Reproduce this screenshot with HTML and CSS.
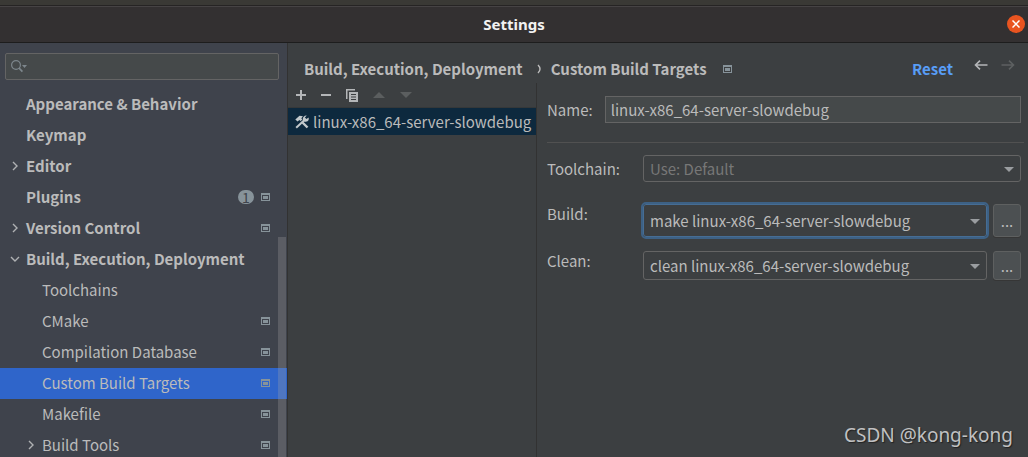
FILE: index.html
```html
<!DOCTYPE html>
<html lang="en">
<head>
<meta charset="utf-8">
<meta name="viewport" content="width=device-width, initial-scale=1">
<title>Settings</title>
<link rel="stylesheet" href="styles.css">
</head>
<body>
<svg class="defs" aria-hidden="true">
  <symbol id="project" viewBox="0 0 9 8"><path fill="currentColor" fill-rule="evenodd" d="M0 0h9v8H0zM1 2v5h7V2zM2 3h5v3H2z"/></symbol>
  <symbol id="right" viewBox="0 0 10 10"><path d="M3 1l4 4-4 4" fill="none" stroke="currentColor" stroke-width="1.4"/></symbol>
  <symbol id="down" viewBox="0 0 10 10"><path d="M1 3l4 4 4-4" fill="none" stroke="currentColor" stroke-width="1.4"/></symbol>
  <symbol id="caret" viewBox="0 0 10 5"><path d="M0 0h10L5 5z" fill="currentColor"/></symbol>
</svg>
<div class="window">
  <div class="backdrop"></div>
  <header class="titlebar">
    <h1 class="title">Settings</h1>
    <button class="close" aria-label="Close"><svg width="8" height="8" viewBox="0 0 8 8"><path d="M.5.5l7 7M7.5.5l-7 7" stroke="#fff" stroke-width="1.5"/></svg></button>
  </header>
  <div class="body">
    <aside class="sidebar">
      <div class="search">
        <svg class="search-icon" width="16" height="13" viewBox="0 0 16 13"><circle cx="5" cy="5" r="4.4" fill="none" stroke="#7d868c" stroke-width="1.2"/><path d="M8 8l3.4 3.6" stroke="#7d868c" stroke-width="1.8"/><path d="M11 5h5l-2.500 3z" fill="#7d868c"/></svg>
        <input class="search-input" type="text" aria-label="Search settings">
      </div>
      <nav class="tree" aria-label="Settings categories">
        <a class="row group" href="#"><span class="arrow"></span><span class="name">Appearance &amp; Behavior</span></a>
        <a class="row group" href="#"><span class="arrow"></span><span class="name">Keymap</span></a>
        <a class="row group" href="#"><svg class="arrow"><use href="#right"/></svg><span class="name">Editor</span></a>
        <a class="row group" href="#"><span class="arrow"></span><span class="name">Plugins</span><span class="badge">1</span><svg class="project"><use href="#project"/></svg></a>
        <a class="row group" href="#"><svg class="arrow"><use href="#right"/></svg><span class="name">Version Control</span><svg class="project"><use href="#project"/></svg></a>
        <a class="row group" href="#"><svg class="arrow"><use href="#down"/></svg><span class="name">Build, Execution, Deployment</span></a>
        <a class="row child" href="#"><span class="arrow"></span><span class="name">Toolchains</span></a>
        <a class="row child" href="#"><span class="arrow"></span><span class="name">CMake</span><svg class="project"><use href="#project"/></svg></a>
        <a class="row child" href="#"><span class="arrow"></span><span class="name">Compilation Database</span><svg class="project"><use href="#project"/></svg></a>
        <a class="row child selected" href="#" aria-current="page"><span class="arrow"></span><span class="name">Custom Build Targets</span><svg class="project"><use href="#project"/></svg></a>
        <a class="row child" href="#"><span class="arrow"></span><span class="name">Makefile</span><svg class="project"><use href="#project"/></svg></a>
        <a class="row child" href="#"><svg class="arrow"><use href="#right"/></svg><span class="name">Build Tools</span><svg class="project"><use href="#project"/></svg></a>
      </nav>
      <div class="scrollbar"></div>
    </aside>
    <main class="content">
      <div class="crumbs">
        <span>Build, Execution, Deployment</span>
        <svg class="sep" width="5" height="10" viewBox="0 0 5 10"><path d="M1 1q4 4 0 8" fill="none" stroke="currentColor" stroke-width="1.4"/></svg>
        <span>Custom Build Targets</span>
        <svg class="project"><use href="#project"/></svg>
        <a class="reset" href="#">Reset</a>
        <div class="history">
          <button class="tool" aria-label="Back"><svg width="14" height="10" viewBox="0 0 14 10"><path d="M13.500 5H1.500M6 .6L1.500 5 6 9.400" fill="none" stroke="#b4b6b8" stroke-width="1.6"/></svg></button>
          <button class="tool" aria-label="Forward" disabled><svg width="14" height="10" viewBox="0 0 14 10"><path d="M.5 5h12M8 .6L12.500 5 8 9.400" fill="none" stroke="#5d6061" stroke-width="1.6"/></svg></button>
        </div>
      </div>
      <div class="panes">
        <section class="targets">
          <div class="toolbar">
            <button class="tool" aria-label="Add"><svg width="10" height="10" viewBox="0 0 10 10"><path d="M5 0v10M0 5h10" stroke="#b4b6b8" stroke-width="2"/></svg></button>
            <button class="tool" aria-label="Remove"><svg width="10" height="10" viewBox="0 0 10 10"><path d="M0 5h10" stroke="#b4b6b8" stroke-width="2"/></svg></button>
            <button class="tool" aria-label="Copy"><svg width="12" height="13" viewBox="0 0 12 13"><path d="M0 0h9v1.500H1.500V10H0z" fill="#b4b6b8"/><path fill="#b4b6b8" fill-rule="evenodd" d="M3 3h9v10H3zM5 5v1h5V5zM5 7.500v1h5v-1zM5 10v1h5v-1z"/></svg></button>
            <button class="tool" aria-label="Move up" disabled><svg width="12" height="6" viewBox="0 0 12 6"><path d="M0 6h12L6 0z" fill="#5b5e5f"/></svg></button>
            <button class="tool" aria-label="Move down" disabled><svg width="12" height="6" viewBox="0 0 12 6"><path d="M0 0h12L6 6z" fill="#5b5e5f"/></svg></button>
          </div>
          <button class="target">
            <svg width="14" height="14" viewBox="0 0 14 14"><path d="M.3 4.600L4.500.8 8 1.300 6.300 3.300l1 1.200-1.700 1.600-1.300-1.200-1.700 1.500z" fill="#c3c9cc"/><path d="M7.500 7.500l5 5" stroke="#c3c9cc" stroke-width="2.400"/><path d="M1.200 12.700L9.500 5" stroke="#c3c9cc" stroke-width="2"/><path d="M11.700.6L9.900 2.500l1.600 1.600 2-1.700q.9 2.600-1 3.900-1.500.9-3.300.1L7.900 5q-.5-2 .8-3.300 1.300-1.300 3-1.100z" fill="#c3c9cc"/></svg>
            <span>linux-x86_64-server-slowdebug</span>
          </button>
        </section>
        <form class="form">
          <div class="name-row">
            <label for="name">Name:</label>
            <input class="field" id="name" type="text" value="linux-x86_64-server-slowdebug">
          </div>
          <hr class="rule">
          <div class="fields">
            <label class="toolchain-label" for="toolchain">Toolchain:</label>
            <div class="combo wide"><select class="select muted" id="toolchain"><option>Use: Default</option></select><svg class="caret"><use href="#caret"/></svg></div>
            <label for="build">Build:</label>
            <div class="combo tall focused"><select class="select" id="build"><option>make linux-x86_64-server-slowdebug</option></select><svg class="caret"><use href="#caret"/></svg></div>
            <button class="more" type="button" aria-label="Edit build tool">...</button>
            <label for="clean">Clean:</label>
            <div class="combo"><select class="select" id="clean"><option>clean linux-x86_64-server-slowdebug</option></select><svg class="caret"><use href="#caret"/></svg></div>
            <button class="more" type="button" aria-label="Edit clean tool">...</button>
          </div>
        </form>
      </div>
    </main>
  </div>
  <div class="watermark">CSDN @kong-kong</div>
</div>
</body>
</html>
```

FILE: styles.css
```css
* { box-sizing: border-box; }

body {
  margin: 0;
  background: #3c3f41;
  color: #bbbbbb;
  font: 15px/20px "Noto Sans CJK SC", "Noto Sans", sans-serif;
}

a { color: inherit; text-decoration: none; }
button, input, select { font: inherit; color: inherit; margin: 0; }
button { padding: 0; border: 0; background: none; }
svg { display: block; flex: none; }
.defs { position: absolute; width: 0; height: 0; }

.window {
  position: relative;
  display: flex;
  flex-direction: column;
  height: 100vh;
  overflow: hidden;
}

.backdrop { flex: none; height: 5px; background: #3a3935; }

.titlebar {
  flex: none;
  display: grid;
  grid-template-columns: 1fr auto 1fr;
  align-items: center;
  height: 38px;
  padding: 0 3px;
  background: #333031;
  border-top: 1px solid #262424;
  border-bottom: 1px solid #1d1d1d;
  box-shadow: inset 0 1px #464344;
}
.title {
  grid-column: 2;
  margin: 0;
  color: #f2f2f2;
  font: bold 15px/20px "Noto Sans", sans-serif;
}
.close {
  justify-self: end;
  display: grid;
  place-items: center;
  width: 18px;
  height: 18px;
  border-radius: 50%;
  background: #e95420;
}

.body { flex: 1; display: flex; min-height: 0; }

.sidebar {
  position: relative;
  flex: none;
  width: 288px;
  background: #3f434c;
  border-right: 1px solid #323232;
  overflow: hidden;
}
.search {
  display: flex;
  align-items: center;
  gap: 4px;
  height: 27px;
  margin: 10px 8px 9px 5px;
  padding-left: 5px;
  border: 1px solid #646464;
  border-radius: 2px;
  background: #45494a;
}
.search-input { flex: 1; min-width: 0; border: 0; outline: 0; background: none; }

.row {
  display: flex;
  align-items: center;
  height: 31px;
  padding: 0 17px 2px 0;
}
.group { padding-left: 10px; font-weight: bold; }
.child { padding-left: 26px; }
.selected { background: #2f65ca; }
.arrow { width: 10px; height: 10px; margin-right: 6px; color: #afb1b3; }
.name { flex: 1; white-space: nowrap; }
.project { width: 9px; height: 8px; color: #87939a; }
.badge {
  width: 16px;
  height: 14px;
  margin-right: 7px;
  border-radius: 7px;
  background: #87939a;
  color: #3f434c;
  font-weight: normal;
  font-size: 14px;
  line-height: 14px;
  text-align: center;
}
.scrollbar {
  position: absolute;
  top: 194px;
  right: 1px;
  bottom: 0;
  width: 8px;
  background: rgba(166, 166, 166, 0.27);
}

.content { flex: 1; display: flex; flex-direction: column; min-width: 0; }
.crumbs {
  display: flex;
  align-items: center;
  height: 40px;
  padding: 12px 13px 0 16px;
  font-weight: bold;
  white-space: nowrap;
}
.sep { margin: 0 9px 0 14px; }
.crumbs .project { margin-left: 16px; }
.reset { margin-left: auto; color: #589df6; }
.history { display: flex; gap: 13px; margin: 0 0 8px 21px; }

.panes { flex: 1; display: flex; min-height: 0; }
.targets { flex: none; width: 249px; border-right: 1px solid #323232; }
.toolbar {
  display: flex;
  align-items: center;
  gap: 15px;
  height: 25px;
  padding-left: 8px;
  border-bottom: 1px solid #353839;
}
.target {
  display: flex;
  align-items: center;
  gap: 4px;
  width: 100%;
  height: 27px;
  padding-left: 7px;
  background: #0d293e;
  white-space: nowrap;
}

.form { flex: 1; min-width: 0; padding: 13px 4px 0 10px; }
.name-row { display: flex; align-items: center; gap: 12px; padding-right: 3px; }
.field {
  flex: 1;
  min-width: 0;
  height: 27px;
  padding: 0 5px;
  border: 1px solid #646464;
  border-radius: 0;
  background: #45494a;
}
.rule { height: 1px; margin: 19px 0 12px; border: 0; background: #515151; }
.fields {
  display: grid;
  grid-template-columns: 90px 1fr 28px;
  column-gap: 6px;
  align-items: start;
  padding-right: 3px;
}
.toolchain-label { padding-top: 4px; }
.combo { position: relative; height: 29px; }
.wide { grid-column: span 2; height: 27px; margin-bottom: 22px; }
.tall { height: 33px; margin-bottom: 14px; }
.tall + .more { height: 33px; }
.select {
  appearance: none;
  width: 100%;
  height: 100%;
  padding: 0 24px 0 6px;
  border: 1px solid #646464;
  border-radius: 3px;
  background: #3c3f41;
}
.muted { color: #777777; }
.focused .select { border-color: #466d94; outline: 2px solid #3d6185; outline-offset: 0; }
.caret {
  position: absolute;
  top: calc(50% - 2px);
  right: 7px;
  width: 10px;
  height: 5px;
  color: #9a9da0;
  pointer-events: none;
}
.more {
  height: 29px;
  border: 1px solid #5e6060;
  border-radius: 3px;
  background: #4c5052;
  box-shadow: 0 1px #363636;
}

.watermark {
  position: absolute;
  right: 15px;
  bottom: 8px;
  color: #c0c1c2;
  font: 19px/28px "Noto Sans", sans-serif;
  text-shadow: 1px 1px 1px #222222;
}
```
